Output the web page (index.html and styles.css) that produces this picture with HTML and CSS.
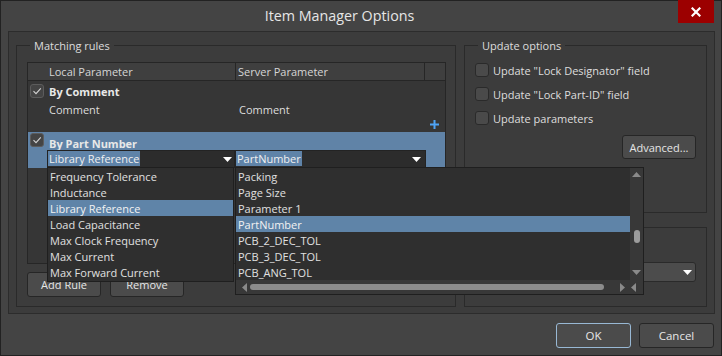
FILE: index.html
```html
<!DOCTYPE html>
<html>
<head>
<meta charset="utf-8">
<title>Item Manager Options</title>
<link rel="stylesheet" href="styles.css">
</head>
<body>
<div class="window">
  <div class="titlebar">
    <div class="title">Item Manager Options</div>
    <div class="close">
      <svg width="10" height="10" viewBox="0 0 10 10"><path d="M1.5 1.5 L8.5 8.5 M8.5 1.5 L1.5 8.5" stroke="#fff" stroke-width="2.2" stroke-linecap="square"/></svg>
    </div>
  </div>

  <div class="panel">
    <div class="group left-group">
      <div class="legend">Matching rules</div>
      <div class="table">
        <div class="thead">
          <div class="th c1">Local Parameter</div>
          <div class="th c2">Server Parameter</div>
          <div class="th c3"></div>
        </div>
        <div class="tbody">
          <div class="rule">
            <div class="rule-head">
              <span class="cb checked"><svg width="12" height="12" viewBox="0 0 12 12"><path d="M2.5 6.2 L5 8.6 L9.8 3.4" fill="none" stroke="#d4d4d4" stroke-width="1.1"/></svg></span>
              <span class="rule-name">By Comment</span>
            </div>
            <div class="rule-row">
              <span class="cell1">Comment</span>
              <span class="cell2">Comment</span>
            </div>
            <div class="add-row">
              <svg width="9" height="9" viewBox="0 0 9 9"><path d="M4.5 0 V9 M0 4.5 H9" stroke="#4ea3f5" stroke-width="2"/></svg>
            </div>
          </div>
          <div class="rule selected">
            <div class="rule-head">
              <span class="cb checked"><svg width="12" height="12" viewBox="0 0 12 12"><path d="M2.5 6.2 L5 8.6 L9.8 3.4" fill="none" stroke="#d4d4d4" stroke-width="1.1"/></svg></span>
              <span class="rule-name">By Part Number</span>
            </div>
            <div class="combos">
              <div class="combo combo-local">
                <span class="combo-text">Library Reference</span>
                <svg class="arrow" width="9" height="5" viewBox="0 0 9 5"><path d="M0 0 H9 L4.5 5 Z" fill="#fff"/></svg>
                <div class="dropdown dd-local">
                  <div class="item">Frequency Tolerance</div>
                  <div class="item">Inductance</div>
                  <div class="item active">Library Reference</div>
                  <div class="item">Load Capacitance</div>
                  <div class="item">Max Clock Frequency</div>
                  <div class="item">Max Current</div>
                  <div class="item">Max Forward Current</div>
                </div>
              </div>
              <div class="combo combo-server">
                <span class="combo-text">PartNumber</span>
                <svg class="arrow" width="9" height="5" viewBox="0 0 9 5"><path d="M0 0 H9 L4.5 5 Z" fill="#fff"/></svg>
                <div class="dropdown dd-server">
                  <div class="dd-items">
                    <div class="item">Packing</div>
                    <div class="item">Page Size</div>
                    <div class="item">Parameter 1</div>
                    <div class="item active">PartNumber</div>
                    <div class="item">PCB_2_DEC_TOL</div>
                    <div class="item">PCB_3_DEC_TOL</div>
                    <div class="item">PCB_ANG_TOL</div>
                  </div>
                  <div class="vscroll">
                    <svg width="9" height="5" viewBox="0 0 9 5"><path d="M0 5 H9 L4.5 0 Z" fill="#8a8a8a"/></svg>
                    <div class="vtrack"><div class="vthumb"></div></div>
                    <svg width="9" height="5" viewBox="0 0 9 5"><path d="M0 0 H9 L4.5 5 Z" fill="#8a8a8a"/></svg>
                  </div>
                  <div class="hscroll">
                    <svg width="5" height="9" viewBox="0 0 5 9"><path d="M5 0 V9 L0 4.5 Z" fill="#8a8a8a"/></svg>
                    <div class="hthumb"></div>
                    <svg width="5" height="9" viewBox="0 0 5 9"><path d="M0 0 V9 L5 4.5 Z" fill="#8a8a8a"/></svg>
                  </div>
                  <div class="corner">
                    <svg width="5" height="9" viewBox="0 0 5 9"><path d="M5 0 V9 L0 4.5 Z" fill="#8a8a8a"/></svg>
                  </div>
                </div>
              </div>
            </div>
          </div>
        </div>
      </div>
      <div class="btnrow">
        <button class="btn rule-btn">Add Rule</button>
        <button class="btn rule-btn">Remove</button>
      </div>
    </div>

    <div class="right-col">
      <div class="group update-group">
        <div class="legend">Update options</div>
        <label class="check-row first"><span class="cb"></span>Update "Lock Designator" field</label>
        <label class="check-row"><span class="cb"></span>Update "Lock Part-ID" field</label>
        <label class="check-row"><span class="cb"></span>Update parameters</label>
        <button class="btn advanced">Advanced...</button>
        <div class="check-row hidden-row"><span class="cb"></span></div>
      </div>
      <div class="group second-group">
        <div class="combo2">
          <svg width="9" height="5" viewBox="0 0 9 5"><path d="M0 0 H9 L4.5 5 Z" fill="#fff"/></svg>
        </div>
      </div>
    </div>
  </div>

  <div class="footer">
    <button class="btn footer-btn ok">OK</button>
    <button class="btn footer-btn">Cancel</button>
  </div>
</div>
</body>
</html>
```

FILE: styles.css
```css
* { box-sizing: border-box; }
html, body { margin: 0; padding: 0; }
body {
  background: #444444;
  font-family: "Open Sans", "Noto Sans", sans-serif;
  font-size: 11px;
  color: #dddddd;
}
.window {
  width: 722px;
  height: 356px;
  border: 1px solid #222222;
  background: #444444;
  display: flex;
  flex-direction: column;
}

/* title bar */
.titlebar {
  height: 30px;
  display: flex;
  align-items: flex-start;
  flex: none;
}
.title {
  flex: 1;
  text-align: center;
  font-size: 14.3px;
  line-height: 30px;
  color: #e6e6e6;
}
.close {
  width: 36px;
  height: 23px;
  margin-top: -1px;
  margin-right: 7px;
  background: #9c0000;
  display: flex;
  align-items: center;
  justify-content: center;
}

/* main panel */
.panel {
  flex: none;
  height: 283px;
  margin: 0 6px 0 7px;
  border: 1px solid #2c2c2c;
  background: #3c3c3c;
  padding: 13px 7px 6px 7px;
  display: flex;
  gap: 8px;
}
.group {
  border: 1px solid #2a2a2a;
  display: flex;
  flex-direction: column;
}
.legend {
  margin-top: -8px;
  margin-left: 3px;
  padding: 0 4px;
  height: 15px;
  line-height: 15px;
  width: max-content;
  background: #3c3c3c;
  color: #dcdcdc;
}
.left-group {
  width: 440px;
  flex: none;
  padding: 0 9px 9px 10px;
}

/* table */
.table {
  margin-top: 9px;
  width: 419px;
  height: 202px;
  border: 1px solid #262626;
  background: #363636;
  display: flex;
  flex-direction: column;
}
.thead {
  height: 18px;
  flex: none;
  display: flex;
  background: #3f3f3f;
  border-bottom: 1px solid #262626;
  color: #d6d6d6;
}
.th { line-height: 17px; white-space: nowrap; }
.th.c1 { width: 208px; padding-left: 21px; border-right: 1px solid #262626; }
.th.c2 { width: 189px; padding-left: 2px; border-right: 1px solid #262626; }
.th.c3 { flex: 1; }

.tbody { flex: 1; display: flex; flex-direction: column; }
.rule { display: flex; flex-direction: column; padding-left: 2px; }
.rule:first-child { padding-top: 3px; height: 51px; }
.rule-head {
  height: 16px;
  display: flex;
  align-items: center;
  gap: 5px;
}
.rule-name { font-weight: bold; color: #e8e8e8; line-height: 16px; }
.cb {
  width: 14px;
  height: 14px;
  flex: none;
  border: 1px solid #2a2a2a;
  border-radius: 3px;
  background: #4a4a4a;
  display: flex;
  align-items: center;
  justify-content: center;
}
.cb.checked {
  border-color: #5c5c5c;
  background: #444444;
}
.rule-head .cb { margin-bottom: 3px; }
.rule-row { height: 16px; display: flex; line-height: 16px; margin-top: 2px; }
.cell1 { width: 208px; padding-left: 19px; }
.cell2 { padding-left: 1px; }
.add-row {
  height: 13px;
  display: flex;
  justify-content: flex-end;
  align-items: center;
  padding-right: 6px;
}
.rule.selected {
  background: #6083a7;
  height: 36px;
  padding-top: 1px;
}
.selected .rule-head {
  height: 17px;
  align-items: flex-start;
}
.selected .rule-head .cb { margin-bottom: 0; }
.selected .rule-name { padding-top: 3px; }
.combos {
  display: flex;
  padding-left: 17px;
}
.combo {
  position: relative;
  height: 18px;
  border: 1px solid #232323;
  background: #2c2c2c;
  display: flex;
  align-items: flex-start;
}
.combo-local { width: 188px; }
.combo-server { width: 191px; }
.combo-text {
  background: #5f83a8;
  color: #f0f0f0;
  line-height: 15px;
  height: 15px;
  padding: 0 1px 0 1px;
}
.combo .arrow {
  margin-left: auto;
  margin-right: 2px;
  margin-top: 6px;
}
.combo-server .arrow { margin-right: 4px; }

/* dropdown lists */
.dropdown {
  position: absolute;
  top: 100%;
  left: -1px;
  z-index: 10;
  background: #2f2f2f;
  border: 1px solid #1f1f1f;
  color: #e0e0e0;
}
.dd-local { width: 187px; height: 115px; }
.dd-server {
  width: 409px;
  height: 128px;
  display: grid;
  grid-template-columns: 1fr 13px;
  grid-template-rows: 112px 14px;
}
.item {
  height: 16px;
  line-height: 15px;
  padding: 1px 0 0 2px;
  white-space: nowrap;
}
.item.active { background: #5f84a8; color: #f2f2f2; }
.vscroll {
  background: #383838;
  display: flex;
  flex-direction: column;
  align-items: center;
  padding: 4px 0 5px 0;
}
.vtrack { flex: 1; width: 100%; display: flex; justify-content: center; }
.vthumb {
  width: 6px;
  height: 13px;
  margin-top: 53px;
  border-radius: 3px;
  background: #9c9c9c;
}
.hscroll {
  background: #383838;
  display: flex;
  align-items: center;
  padding: 0 5px 0 6px;
  gap: 3px;
}
.hthumb {
  flex: 1;
  height: 6px;
  margin-right: 13px;
  border-radius: 3px;
  background: #8c8c8c;
}
.corner {
  background: #383838;
  display: flex;
  align-items: center;
  padding-left: 1px;
}

/* buttons */
.btn {
  font-family: "Open Sans", "Noto Sans", sans-serif;
  font-size: 11px;
  color: #e6e6e6;
  background: #4b4b4b;
  border: 1px solid #262626;
  border-radius: 3px;
  padding: 0;
}
.btnrow { display: flex; gap: 9px; margin-top: 8px; }
.rule-btn { width: 74px; height: 25px; }

/* right column */
.right-col {
  width: 243px;
  flex: none;
  display: flex;
  flex-direction: column;
  gap: 14px;
}
.update-group { height: 168px; padding: 0 10px; }
.check-row {
  display: flex;
  align-items: center;
  gap: 4px;
  height: 14px;
  margin-top: 10px;
  color: #dedede;
  white-space: nowrap;
}
.check-row.first { margin-top: 10px; }
.advanced {
  width: 74px;
  height: 24px;
  align-self: flex-end;
  margin-top: 10px;
}
.hidden-row { margin-top: 8px; }
.second-group { height: 80px; padding: 34px 10px 0 10px; }
.combo2 {
  height: 20px;
  border: 1px solid #2a2a2a;
  border-radius: 3px;
  background: #4c4c4c;
  display: flex;
  align-items: center;
  justify-content: flex-end;
  padding-right: 3px;
}

/* footer */
.footer {
  flex: 1;
  display: flex;
  justify-content: flex-end;
  gap: 8px;
  padding: 9px 7px 0 0;
}
.footer-btn { width: 75px; height: 25px; font-size: 11.5px; }
.ok { border-color: #98b8d4; }
```
